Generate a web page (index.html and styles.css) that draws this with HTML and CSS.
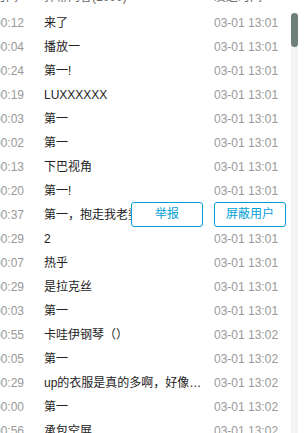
FILE: index.html
```html
<!DOCTYPE html>
<html>
<head>
<meta charset="utf-8">
<link rel="stylesheet" href="styles.css">
</head>
<body>
<div class="panel">
  <div class="main">
    <div class="row head">
      <span class="time">时间</span>
      <span class="text">弹幕内容(1000)</span>
      <span class="date">发送时间</span>
    </div>
    <div class="list">
      <div class="row"><span class="time">00:12</span><span class="text">来了</span><span class="date">03-01 13:01</span></div>
      <div class="row"><span class="time">00:04</span><span class="text">播放一</span><span class="date">03-01 13:01</span></div>
      <div class="row"><span class="time">00:24</span><span class="text">第一!</span><span class="date">03-01 13:01</span></div>
      <div class="row"><span class="time">00:19</span><span class="text">LUXXXXXX</span><span class="date">03-01 13:01</span></div>
      <div class="row"><span class="time">00:03</span><span class="text">第一</span><span class="date">03-01 13:01</span></div>
      <div class="row"><span class="time">00:02</span><span class="text">第一</span><span class="date">03-01 13:01</span></div>
      <div class="row"><span class="time">00:13</span><span class="text">下巴视角</span><span class="date">03-01 13:01</span></div>
      <div class="row"><span class="time">00:20</span><span class="text">第一!</span><span class="date">03-01 13:01</span></div>
      <div class="row hover">
        <span class="time">00:37</span><span class="text">第一，抱走我老婆</span><span class="date">03-01 13:01</span>
        <div class="actions">
          <button class="btn">举报</button>
          <button class="btn">屏蔽用户</button>
        </div>
      </div>
      <div class="row"><span class="time">00:29</span><span class="text">2</span><span class="date">03-01 13:01</span></div>
      <div class="row"><span class="time">00:07</span><span class="text">热乎</span><span class="date">03-01 13:01</span></div>
      <div class="row"><span class="time">00:29</span><span class="text">是拉克丝</span><span class="date">03-01 13:01</span></div>
      <div class="row"><span class="time">00:03</span><span class="text">第一</span><span class="date">03-01 13:01</span></div>
      <div class="row"><span class="time">00:55</span><span class="text">卡哇伊钢琴（）</span><span class="date">03-01 13:02</span></div>
      <div class="row"><span class="time">00:05</span><span class="text">第一</span><span class="date">03-01 13:02</span></div>
      <div class="row"><span class="time">00:29</span><span class="text">up的衣服是真的多啊，好像每次都不一样</span><span class="date">03-01 13:02</span></div>
      <div class="row"><span class="time">00:00</span><span class="text">第一</span><span class="date">03-01 13:02</span></div>
      <div class="row"><span class="time">00:56</span><span class="text">承包空屏</span><span class="date">03-01 13:02</span></div>
    </div>
  </div>
  <div class="bar">
    <div class="thumb"></div>
  </div>
</div>
</body>
</html>
```

FILE: styles.css
```css
html, body {
  margin: 0;
  height: 100%;
  overflow: hidden;
  background: #fff;
}

body {
  font-family: "Liberation Sans", "Noto Sans CJK SC", sans-serif;
  font-size: 12px;
  color: #222;
}

.panel {
  display: flex;
  height: 446px;
  margin-top: -13px;
}

.main {
  width: 297px;
  margin-left: -6px;
  overflow: hidden;
}

.row {
  position: relative;
  display: flex;
  height: 24px;
  line-height: 24px;
  padding-right: 13px;
  white-space: nowrap;
}

.time {
  flex: none;
  width: 50px;
  color: #999;
}

.text {
  flex: 1;
  min-width: 0;
  overflow: hidden;
  text-overflow: ellipsis;
  padding-right: 12px;
}

.date {
  flex: none;
  width: 64px;
  color: #999;
}

.head {
  line-height: 20px;
}

.head .time, .head .text, .head .date {
  color: #666;
}

.actions {
  position: absolute;
  top: -1px;
  right: 5px;
  display: flex;
  gap: 11px;
}

.btn {
  width: 72px;
  height: 25px;
  padding: 0;
  border: 1px solid #00a1d6;
  border-radius: 3px;
  background: #fff;
  color: #00a1d6;
  font-family: inherit;
  font-size: 12px;
  line-height: 23px;
  cursor: pointer;
}

.bar {
  flex: none;
  width: 7px;
  margin-top: 26px;
  background: #f4f4f4;
}

.thumb {
  height: 34px;
  border-radius: 4px;
  background: #6f7f7a;
}
```
